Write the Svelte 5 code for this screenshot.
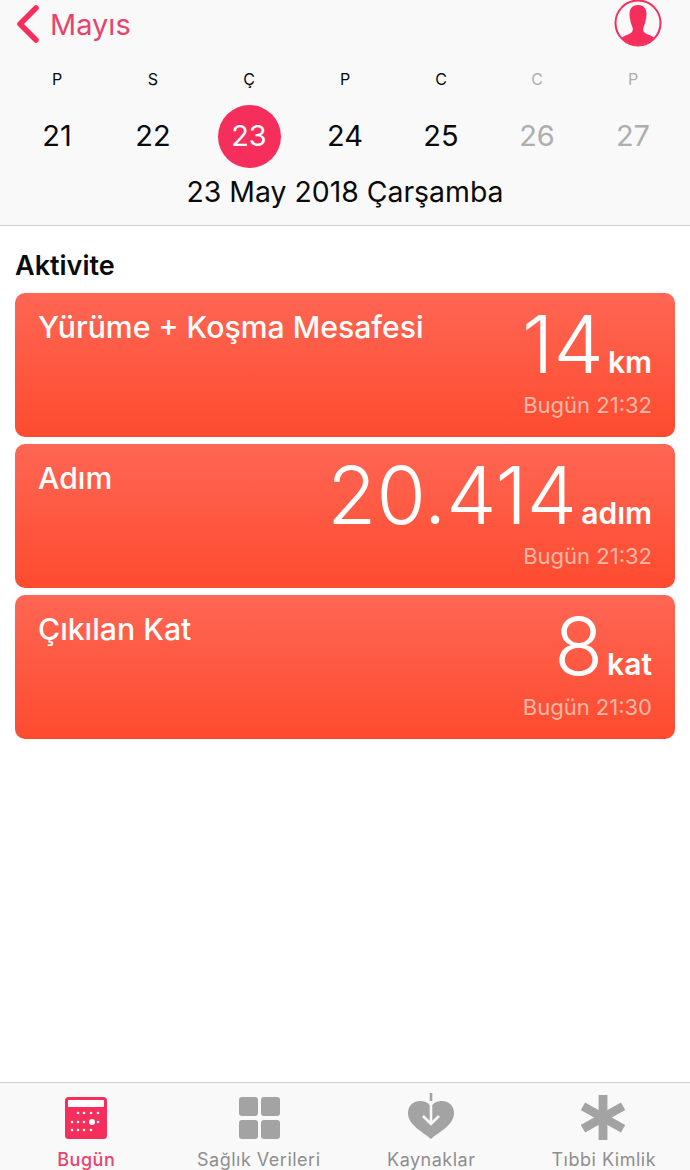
<script>
  const week = [
    { letter: 'P', day: 21 },
    { letter: 'S', day: 22 },
    { letter: 'Ç', day: 23, selected: true },
    { letter: 'P', day: 24 },
    { letter: 'C', day: 25 },
    { letter: 'C', day: 26, off: true },
    { letter: 'P', day: 27, off: true }
  ];

  const cards = [
    { title: 'Yürüme + Koşma Mesafesi', value: '14', unit: 'km', time: 'Bugün 21:32' },
    { title: 'Adım', value: '20.414', unit: 'adım', time: 'Bugün 21:32' },
    { title: 'Çıkılan Kat', value: '8', unit: 'kat', time: 'Bugün 21:30' }
  ];

  const dots = [
    [13, 16], [19, 16], [26, 16], [33, 16],
    [7, 25], [13, 25], [19, 25], [33, 25],
    [7, 33], [13, 33], [19, 33], [26, 33]
  ];
</script>

<div class="page">
  <header class="top">
    <div class="nav">
      <div class="back">
        <svg class="chevron" width="24" height="46" viewBox="0 0 24 46">
          <path d="M21 7 L5 23 L21 39" fill="none" stroke="#f62e5c" stroke-width="5.500" stroke-linecap="round" stroke-linejoin="round" />
        </svg>
        <span>Mayıs</span>
      </div>
      <svg class="avatar" width="48" height="48" viewBox="0 0 48 48">
        <defs>
          <clipPath id="round"><circle cx="24" cy="24" r="22" /></clipPath>
        </defs>
        <circle cx="24" cy="24" r="22.500" fill="#f9f9f9" stroke="#f62e5c" stroke-width="2" />
        <path clip-path="url(#round)" fill="#f62e5c" d="M24 6c6 0 8.500 4 8.500 9 0 3-.5 5-1 7 0 2-1.500 4.500-2 6.500-.5 1.500-.5 3 .5 4.500 2 2.500 7 3 10 5.500v9H8v-9c3-2.500 8-3 10-5.500 1-1.500 1-3 .5-4.500-.5-2-2-4.500-2-6.500-.5-2-1-4-1-7C15.500 10 18 6 24 6z" />
      </svg>
    </div>
    <div class="week">
      {#each week as d}
        <div class="letter" class:off={d.off}>{d.letter}</div>
      {/each}
      {#each week as d}
        <div class="day" class:off={d.off} class:selected={d.selected}><span>{d.day}</span></div>
      {/each}
    </div>
    <div class="date">23 May 2018 Çarşamba</div>
  </header>

  <main class="content">
    <h2>Aktivite</h2>
    <div class="cards">
      {#each cards as c}
        <section class="card">
          <div class="title">{c.title}</div>
          <div class="right">
            <div class="reading"><span class="value">{c.value}</span><span class="unit">{c.unit}</span></div>
            <div class="time">{c.time}</div>
          </div>
        </section>
      {/each}
    </div>
  </main>

  <nav class="tabs">
    <div class="tab active">
      <svg width="42" height="42" viewBox="0 0 42 42" class="icon">
        <rect x="0" y="0" width="42" height="42" rx="3.500" fill="#f62e5c" />
        <rect x="3" y="3" width="36" height="7" fill="#fff" />
        {#each dots as p}
          <circle cx={p[0]} cy={p[1]} r="1.300" fill="#fff" />
        {/each}
        <circle cx="27" cy="25" r="3" fill="#fff" />
      </svg>
      <span>Bugün</span>
    </div>
    <div class="tab">
      <svg width="42" height="42" viewBox="0 0 42 42" class="icon">
        <rect x="1" y="0" width="19" height="19" rx="3" fill="#a3a3a3" />
        <rect x="23" y="0" width="19" height="19" rx="3" fill="#a3a3a3" />
        <rect x="1" y="23" width="19" height="19" rx="3" fill="#a3a3a3" />
        <rect x="23" y="23" width="19" height="19" rx="3" fill="#a3a3a3" />
      </svg>
      <span>Sağlık Verileri</span>
    </div>
    <div class="tab">
      <svg width="48" height="46" viewBox="0 0 48 46" class="icon heart">
        <path fill="#a3a3a3" d="M24 46C16 39 1 32 1 20 1 12 7 8 13 8c5 0 9 2 11 6 2-4 6-6 11-6 6 0 12 4 12 12 0 12-15 19-23 26z" />
        <path d="M24 8V31M16 23l8 8 8-8" fill="none" stroke="#f9f9f9" stroke-width="2.600" />
        <path d="M24 0V8" stroke="#a3a3a3" stroke-width="2.600" />
      </svg>
      <span>Kaynaklar</span>
    </div>
    <div class="tab">
      <svg width="46" height="48" viewBox="0 0 46 48" class="icon star">
        <g stroke="#a3a3a3" stroke-width="9" stroke-linecap="butt">
          <path d="M22 1V47" />
          <path d="M1.500 12.500L42.500 35.500" />
          <path d="M1.500 35.500L42.500 12.500" />
        </g>
      </svg>
      <span>Tıbbi Kimlik</span>
    </div>
  </nav>
</div>

<style>
  :global(body) {
    margin: 0;
    background: #fff;
  }
  .page {
    width: 690px;
    height: 1170px;
    display: flex;
    flex-direction: column;
    font-family: Inter, "Liberation Sans", sans-serif;
    color: #0a0a0a;
    overflow: hidden;
  }
  .top {
    height: 226px;
    box-sizing: border-box;
    background: #f9f9f9;
    border-bottom: 1px solid #cfcfcf;
    flex: none;
  }
  .nav {
    height: 48px;
    display: flex;
    align-items: flex-start;
    justify-content: space-between;
    padding: 0 28px 0 15px;
  }
  .back {
    display: flex;
    align-items: center;
    gap: 11px;
    height: 48px;
    color: #e8446b;
    font-size: 29px;
  }
  .avatar {
    margin-top: -1px;
  }
  .week {
    display: grid;
    grid-template-columns: repeat(7, 96px);
    padding: 0 9px;
    margin-top: 21px;
  }
  .letter {
    text-align: center;
    font-size: 16px;
    line-height: 20px;
    height: 36px;
  }
  .day {
    display: flex;
    justify-content: center;
    font-size: 29px;
    height: 63px;
  }
  .day span {
    width: 63px;
    height: 63px;
    line-height: 61px;
    text-align: center;
    border-radius: 50%;
  }
  .day.selected span {
    background: #f62e5c;
    color: #fff;
  }
  .off {
    color: #aeaeae;
  }
  .date {
    text-align: center;
    font-size: 28.400px;
    line-height: 36px;
    margin-top: 6px;
  }
  .content {
    flex: 1;
    padding: 0 15px;
  }
  h2 {
    margin: 24px 0 11px;
    font-size: 27px;
    line-height: 32px;
    font-weight: 600;
  }
  .cards {
    display: flex;
    flex-direction: column;
    gap: 7.500px;
  }
  .card {
    height: 143.500px;
    box-sizing: border-box;
    padding: 12px 23px 0 23px;
    border-radius: 10px;
    background: linear-gradient(#ff6654, #fe4b2f);
    color: #fff;
    display: flex;
    justify-content: space-between;
  }
  .title {
    font-size: 30.200px;
    font-weight: 500;
    line-height: 40px;
    margin-top: 2px;
  }
  .right {
    display: flex;
    flex-direction: column;
    align-items: flex-end;
  }
  .reading {
    display: flex;
    align-items: baseline;
    gap: 4px;
    margin-top: 6px;
    height: 66px;
  }
  .value {
    font-size: 80px;
    font-weight: 300;
    line-height: 66px;
  }
  .unit {
    font-size: 30px;
    font-weight: 600;
  }
  .time {
    font-size: 22px;
    line-height: 26px;
    margin-top: 15px;
    color: #ffb8a6;
  }
  .tabs {
    height: 88px;
    box-sizing: border-box;
    flex: none;
    background: #f9f9f9;
    border-top: 1px solid #cfcfcf;
    display: grid;
    grid-template-columns: repeat(4, 172.500px);
  }
  .tab {
    display: flex;
    flex-direction: column;
    align-items: center;
    font-size: 18px;
    color: #8e8e8e;
    letter-spacing: .5px;
  }
  .tab .icon {
    margin-top: 14px;
    height: 42px;
  }
  .tab .heart {
    margin-top: 10px;
    height: 46px;
    margin-bottom: 1px;
  }
  .tab .star {
    margin-top: 11px;
    height: 47px;
  }
  .tab span {
    position: absolute;
    bottom: 0;
    line-height: 21px;
  }
  .tab.active {
    color: #e8446b;
    font-weight: 500;
  }
</style>
